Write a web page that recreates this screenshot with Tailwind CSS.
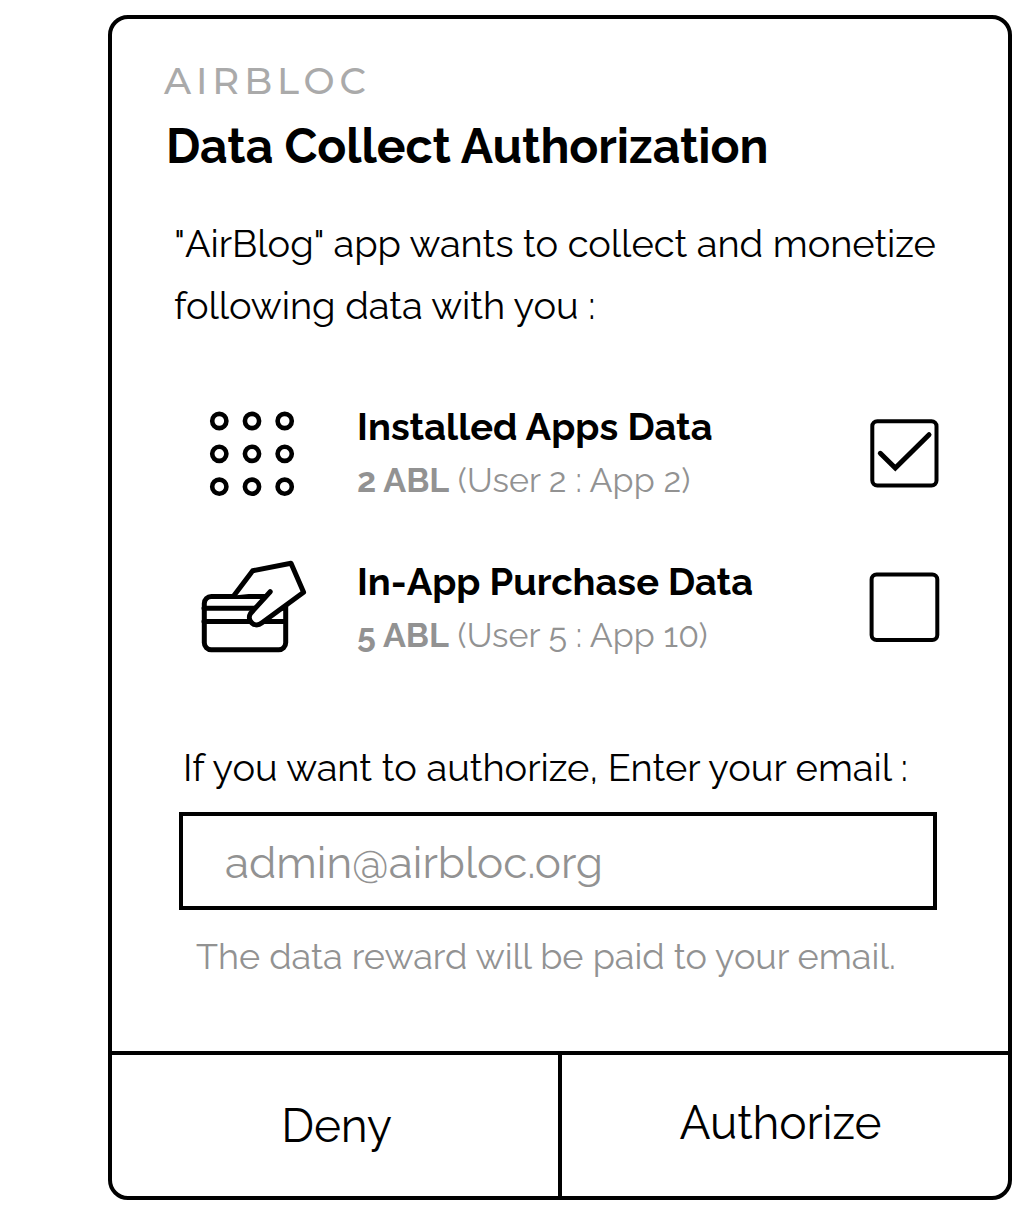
<!DOCTYPE html>
<html lang="en">
<head>
<meta charset="utf-8">
<title>Data Collect Authorization</title>
<script src="https://cdn.jsdelivr.net/npm/@tailwindcss/browser@4"></script>
</head>
<body class="bg-white font-[Raleway,Lato,sans-serif] text-black">
<main class="ml-[108px] mt-[15px] flex h-[1185px] w-[904px] flex-col overflow-hidden rounded-[20px] border-4 border-black">
  <header class="pt-[42px]">
    <div class="pl-[52px] font-[Montserrat,Raleway,sans-serif] text-[37px] leading-[40px] font-medium tracking-[4.9px] text-[#aaaaaa]">AIRBLOC</div>
    <h1 class="mt-[17px] pl-[54px] text-[48px] leading-[56px] font-bold tracking-[-0.06px] whitespace-nowrap">Data Collect Authorization</h1>
    <p class="mt-[39px] pl-[62px] text-[38px] leading-[62px] tracking-[-0.05px] whitespace-nowrap"><span class="tracking-[-0.2px]">"</span>AirBlog" app wants to collect and monetize<br>following data with you :</p>
  </header>

  <section class="mt-[63px] flex flex-col gap-[49px] pr-[68px] pl-[78px]">
    <div class="flex h-[106px]">
      <svg class="h-[106px] w-[130px] shrink-0" viewBox="190 400 130 106" fill="none" stroke="#000" stroke-width="4.6">
        <circle cx="219.3" cy="421" r="7.1"/><circle cx="252" cy="421" r="7.1"/><circle cx="284.7" cy="421" r="7.1"/>
        <circle cx="219.3" cy="453.8" r="7.1"/><circle cx="252" cy="453.8" r="7.1"/><circle cx="284.7" cy="453.8" r="7.1"/>
        <circle cx="219.3" cy="486.7" r="7.1"/><circle cx="252" cy="486.7" r="7.1"/><circle cx="284.7" cy="486.7" r="7.1"/>
      </svg>
      <div class="ml-[37px] flex-1 whitespace-nowrap">
        <h2 class="text-[38px] leading-[53px] font-bold tracking-[0.04px]">Installed Apps Data</h2>
        <p class="pt-px text-[34px] leading-[53px] tracking-[0.07px] text-[#929292]"><b class="tracking-[0px]">2 ABL</b> (User 2 : App 2)</p>
      </div>
      <svg class="h-[106px] w-[72px] shrink-0" viewBox="868 400 72 106" fill="none" stroke="#000" stroke-width="4">
        <rect x="872.3" y="421.3" width="64.2" height="64.2" rx="5"/>
        <path d="M880.3 453.3 895.3 468 929 434.7" stroke-width="5" stroke-linecap="round"/>
      </svg>
    </div>
    <div class="flex h-[106px]">
      <svg class="h-[106px] w-[130px] shrink-0" viewBox="190 555 130 106" fill="none" stroke="#000" stroke-width="5" stroke-linecap="round" stroke-linejoin="round">
        <rect x="204.3" y="596.4" width="81.4" height="53.4" rx="7"/>
        <path d="M204 608.2H284M204 621.4H284"/>
        <path fill="#fff" d="M234 595.5 252.7 570.8 291 563.3 303.6 592.3 262 622.8C254 629 246.5 620 250.5 613.5L270.2 591.7"/>
      </svg>
      <div class="ml-[37px] flex-1 whitespace-nowrap">
        <h2 class="text-[38px] leading-[53px] font-bold">In-App Purchase Data</h2>
        <p class="pt-px text-[34px] leading-[53px] tracking-[0.05px] text-[#929292]"><b class="tracking-[0px]">5 ABL</b> (User 5 : App 10)</p>
      </div>
      <svg class="h-[106px] w-[72px] shrink-0" viewBox="868 555 72 106" fill="none" stroke="#000" stroke-width="4">
        <rect x="871.6" y="574.4" width="65.7" height="65.7" rx="5"/>
      </svg>
    </div>
  </section>

  <section class="mt-[84px] flex-1">
    <label for="email" class="block pl-[71px] text-[38px] leading-[46px] whitespace-nowrap">If you want to authorize, Enter your email :</label>
    <input id="email" type="email" placeholder="admin@airbloc.org" class="mt-[21px] ml-[67px] block h-[98px] w-[758px] border-4 border-black pt-[3px] pl-[42px] text-[44px] placeholder:text-[#929292]">
    <p class="mt-[24px] pl-[84px] text-[36px] leading-[44px] tracking-[-0.02px] whitespace-nowrap text-[#929292]">The data reward will be paid to your email.</p>
  </section>

  <footer class="grid h-[145px] shrink-0 grid-cols-[450px_1fr] border-t-4 border-black">
    <button class="border-r-4 border-black pl-[3px] text-[46px] leading-[54px] tracking-[-0.2px]">Deny</button>
    <button class="pr-[9px] pb-[6px] text-[46px] leading-[54px] tracking-[-0.1px]">Authorize</button>
  </footer>
</main>
</body>
</html>
